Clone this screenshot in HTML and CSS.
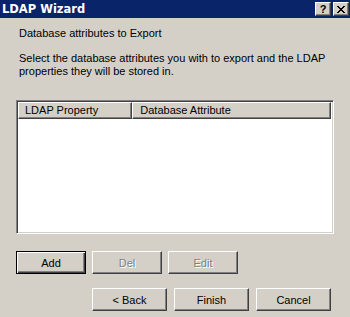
FILE: index.html
```html
<!DOCTYPE html>
<html>
<head>
<meta charset="utf-8">
<link rel="stylesheet" href="styles.css">
</head>
<body>
<div class="window">
  <div class="titlebar">
    <span class="title">LDAP Wizard</span>
    <div class="caption-btns">
      <div class="cbtn"><span class="q">?</span></div>
      <div class="cbtn">
        <svg width="8" height="7" viewBox="0 0 8 7"><path d="M0 0h2v1H0zM6 0h2v1H6zM1 1h2v1H1zM5 1h2v1H5zM2 2h4v1H2zM3 3h2v1H3zM2 4h4v1H2zM1 5h2v1H1zM5 5h2v1H5zM0 6h2v1H0zM6 6h2v1H6z" fill="#000"/></svg>
      </div>
    </div>
  </div>
  <div class="content">
    <div class="heading">Database attributes to Export</div>
    <div class="para">Select the database attributes you with to export and the LDAP properties they will be stored in.</div>
    <div class="listview">
      <div class="header">
        <div class="col col1">LDAP Property</div>
        <div class="col col2">Database Attribute</div>
      </div>
    </div>
    <div class="row row1">
      <button class="btn default">Add</button>
      <button class="btn disabled">Del</button>
      <button class="btn disabled">Edit</button>
    </div>
    <div class="row row2">
      <button class="btn wide">&lt; Back</button>
      <button class="btn wide">Finish</button>
      <button class="btn wide">Cancel</button>
    </div>
  </div>
</div>
</body>
</html>
```
FILE: styles.css
```css
html, body {
  margin: 0;
  padding: 0;
}
body {
  width: 350px;
  height: 317px;
  background: #d4d0c8;
  font-family: "Liberation Sans", Arial, sans-serif;
  font-size: 11px;
  line-height: 13px;
  color: #000;
  overflow: hidden;
}
.titlebar {
  height: 18px;
  background: #0a246a;
  display: flex;
  align-items: center;
  justify-content: space-between;
  padding-left: 2px;
  padding-right: 1px;
}
.title {
  color: #fff;
  font-family: "DejaVu Sans", "Liberation Sans", sans-serif;
  font-weight: bold;
  font-size: 11.5px;
}
.caption-btns {
  display: flex;
  gap: 2px;
}
.cbtn {
  width: 14px;
  height: 12px;
  background: #d4d0c8;
  border: 1px solid;
  border-color: #fff #404040 #404040 #fff;
  box-shadow: inset -1px -1px #808080;
  display: flex;
  align-items: center;
  justify-content: center;
}
.q {
  font-weight: bold;
  font-size: 11px;
  line-height: 11px;
  margin-top: 1px;
}
.content {
  padding: 9px 15px 0 16px;
}
.heading {
  padding-left: 3px;
}
.para {
  margin-top: 12px;
  padding-left: 3px;
  padding-right: 8px;
}
.listview {
  margin-top: 22px;
  width: 313px;
  height: 130px;
  background: #fff;
  border: 1px solid;
  border-color: #808080 #fff #fff #808080;
  box-shadow: inset 1px 1px #404040, inset -1px -1px #d4d0c8;
  padding: 1px 2px 1px 1px;
  box-sizing: content-box;
}
.header {
  display: flex;
  height: 17px;
}
.col {
  background: #d4d0c8;
  border: 1px solid;
  border-color: #fff #404040 #404040 #fff;
  box-shadow: inset -1px -1px #808080;
  padding-left: 6px;
  line-height: 15px;
  box-sizing: border-box;
}
.col1 { width: 115px; }
.col2 { width: 200px; padding-left: 7px; }
.row {
  display: flex;
}
.row1 {
  margin-top: 17px;
  gap: 6px;
}
.row2 {
  margin-top: 14px;
  padding-left: 76px;
  gap: 7px;
}
.btn {
  width: 70px;
  height: 23px;
  margin: 0;
  padding: 0;
  background: #d4d0c8;
  font-family: "Liberation Sans", Arial, sans-serif;
  font-size: 11px;
  font-weight: normal;
  color: #000;
  border: 1px solid;
  border-color: #fff #404040 #404040 #fff;
  box-shadow: inset -1px -1px #808080;
}
.btn.wide { width: 75px; }
.btn.default {
  border: 1px solid #000;
  box-shadow: inset 1px 1px #fff, inset -1px -1px #404040, inset -2px -2px #808080;
}
.btn.disabled {
  color: #808080;
  text-shadow: 1px 1px #fff;
}
```
